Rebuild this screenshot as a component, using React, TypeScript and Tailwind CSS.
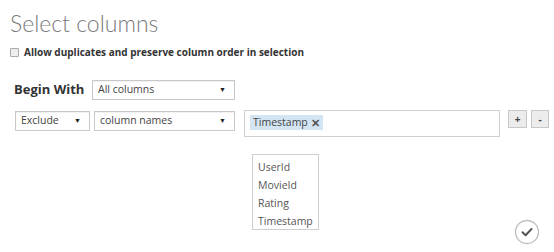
const font = { fontFamily: '"Open Sans", "Noto Sans", sans-serif' };

function Select({ label, className }: { label: string; className: string }) {
  return (
    <div
      className={`flex items-center justify-between border border-[#c8c8c8] bg-white pl-[5px] pr-[8px] text-[10.5px] text-[#444] shadow-[inset_0_1px_1px_rgba(0,0,0,0.06)] ${className}`}
    >
      <span>{label}</span>
      <span className="text-[7px] text-[#222]">▼</span>
    </div>
  );
}

export default function App() {
  return (
    <div className="relative h-[252px] w-[554px] overflow-hidden bg-white" style={font}>
      <div className="pl-[10px] pt-[5px] font-['Lato',sans-serif] text-[23px] font-light leading-[36px] text-[#7a7a7a]">
        Select columns
      </div>
      <div className="mt-[4px] flex items-center gap-[5px] pl-[10px]">
        <div className="h-[9px] w-[9px] rounded-[1px] border border-[#aaa] bg-[#eee]" />
        <span className="text-[10px] font-bold text-[#333]">Allow duplicates and preserve column order in selection</span>
      </div>

      <div className="mt-[20px] flex items-center pl-[14px]">
        <span className="w-[78px] text-[13px] font-bold text-[#333]">Begin With</span>
        <Select label="All columns" className="h-[20px] w-[143px]" />
      </div>

      <div className="mt-[10px] flex items-start pl-[15px]">
        <Select label="Exclude" className="mt-[1px] h-[20px] w-[75px]" />
        <Select label="column names" className="ml-[4px] mt-[1px] h-[20px] w-[141px]" />
        <div className="relative ml-[9px] h-[27px] w-[256px] border border-[#cfcfcf] bg-white">
          <div className="absolute left-[5px] top-[4px] flex h-[15px] items-center gap-[3px] bg-[#d3e5f3] px-[3px] text-[10.5px] text-[#444]">
            <span>Timestamp</span>
            <span className="text-[11px] font-bold leading-none text-[#555]">✕</span>
          </div>
          <div className="absolute left-[7px] top-[43px] flex h-[76px] w-[67px] flex-col border border-[#cfcfcf] bg-white pl-[5px] pt-[3px] text-[10.5px] leading-[18px] text-[#555]">
            <span>UserId</span>
            <span>MovieId</span>
            <span>Rating</span>
            <span>Timestamp</span>
          </div>
        </div>
        <div className="ml-[8px] flex gap-[4px]">
          <div className="flex h-[18px] w-[19px] items-center justify-center border border-[#c8c8c8] bg-[#ececec] text-[10px] font-bold leading-none text-[#444]">+</div>
          <div className="flex h-[18px] w-[18px] items-center justify-center border border-[#c8c8c8] bg-[#ececec] text-[10px] font-bold leading-none text-[#444]">-</div>
        </div>
      </div>

      <svg className="absolute left-[514px] top-[219px]" width="26" height="26" viewBox="0 0 26 26">
        <circle cx="13" cy="13" r="11.5" fill="white" stroke="#bdbdbd" strokeWidth="1.3" />
        <path d="M8.5 13.3 L11.6 16.3 L17.5 10" fill="none" stroke="#555" strokeWidth="2" strokeLinecap="round" strokeLinejoin="round" />
      </svg>
    </div>
  );
}
